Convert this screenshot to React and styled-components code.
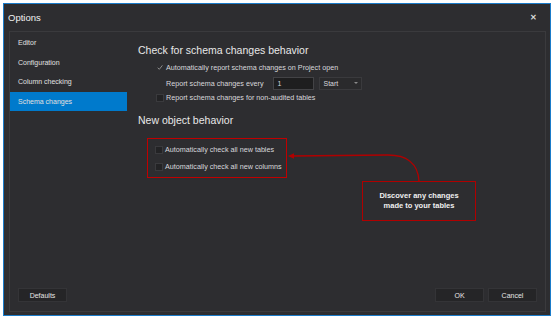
import React from "react";
import styled, { createGlobalStyle } from "styled-components";

const GlobalStyle = createGlobalStyle`
  html, body {
    margin: 0;
    padding: 0;
    background: #ffffff;
  }
  body {
    font-family: "Liberation Sans", Arial, sans-serif;
  }
`;

const Window = styled.div`
  position: relative;
  margin: 3px 0 0 3px;
  width: 546px;
  height: 311px;
  border: 1px solid #1a7bc9;
  background: #2d2d30;
  display: flex;
  flex-direction: column;
  color: #e6e6e6;
`;

const TitleBar = styled.div`
  height: 27px;
  display: flex;
  align-items: center;
  justify-content: space-between;
  padding: 0 13px 0 4px;
  font-size: 9.5px;
  color: #f1f1f1;
`;

const Close = styled.span`
  font-size: 7.5px;
  font-weight: bold;
  color: #d8d8d8;
`;

const Frame = styled.div`
  flex: 1;
  margin: 0 4px 3px 5px;
  border: 1px solid #3a3a3d;
  display: flex;
  flex-direction: column;
`;

const Main = styled.div`
  flex: 1;
  display: flex;
`;

const Sidebar = styled.div`
  width: 117px;
  padding-top: 1px;
  display: flex;
  flex-direction: column;
`;

const NavItem = styled.div`
  height: 19.5px;
  display: flex;
  align-items: center;
  padding-left: 8px;
  font-size: 7px;
  color: #e0e0e0;
  background: ${(p) => (p.$active ? "#007acc" : "transparent")};
`;

const Content = styled.div`
  position: relative;
  flex: 1;
  padding: 9px 0 0 11px;
  display: flex;
  flex-direction: column;
`;

const Heading = styled.div`
  font-size: 10.5px;
  color: #e8e8e8;
  height: 17px;
  margin-top: ${(p) => p.$mt || "0"};
  display: flex;
  align-items: center;
`;

const Group = styled.div`
  padding-top: 2px;
  display: flex;
  flex-direction: column;
`;

const Row = styled.div`
  display: flex;
  align-items: center;
  height: ${(p) => p.$h || "15px"};
  padding-left: ${(p) => p.$indent || "18px"};
  font-size: 7.2px;
  color: #d8d8dc;
  gap: 2px;
`;

const Box = styled.span`
  width: 8px;
  height: 8px;
  box-sizing: border-box;
  display: inline-flex;
  align-items: center;
  justify-content: center;
  background: ${(p) => (p.$checked ? "transparent" : "#232325")};
  border: 1px solid ${(p) => (p.$checked ? "transparent" : "#3a3a3d")};
`;

const Spacer = styled.span`
  width: 8px;
`;

const NumInput = styled.div`
  width: 41px;
  height: 13px;
  margin-left: 8px;
  box-sizing: border-box;
  background: #1e1e1f;
  border: 1px solid #434346;
  font-size: 7px;
  display: flex;
  align-items: center;
  padding-left: 3px;
`;

const Select = styled.div`
  width: 43px;
  height: 13px;
  margin-left: 3px;
  box-sizing: border-box;
  background: #2a2a2c;
  border: 1px solid #3a3a3d;
  display: flex;
  align-items: center;
  justify-content: space-between;
  padding: 0 3px;
  font-size: 7px;
`;

const Caret = styled.span`
  width: 0;
  height: 0;
  border-left: 2px solid transparent;
  border-right: 2px solid transparent;
  border-top: 2px solid #8a8a8a;
`;

const Highlight = styled.div`
  margin: 10px 0 0 9px;
  width: 140px;
  height: 40px;
  box-sizing: border-box;
  border: 1.5px solid #c00000;
  display: flex;
  flex-direction: column;
  justify-content: center;
  gap: 2px;
`;

const Callout = styled.div`
  position: absolute;
  left: 235px;
  top: 149px;
  width: 114px;
  height: 40px;
  box-sizing: border-box;
  border: 1.5px solid #b00000;
  display: flex;
  flex-direction: column;
  align-items: center;
  justify-content: center;
  font-size: 7.5px;
  font-weight: bold;
  line-height: 10px;
  color: #f0f0f0;
  text-align: center;
`;

const Arrow = styled.svg`
  position: absolute;
  left: 161px;
  top: 89px;
  overflow: visible;
`;

const Footer = styled.div`
  height: 23px;
  display: flex;
  align-items: flex-start;
  padding: 0 8px;
`;

const Button = styled.div`
  width: 49px;
  height: 14px;
  box-sizing: border-box;
  background: #252527;
  border: 1px solid #343437;
  font-size: 7px;
  color: #e6e6e6;
  display: flex;
  align-items: center;
  justify-content: center;
  margin-left: ${(p) => p.$ml || "0"};
`;

const Check = () => (
  <svg width="7" height="7" viewBox="0 0 7 7">
    <path d="M0.8 3.8 L2.7 5.6 L6.3 1" fill="none" stroke="#9a9a9a" strokeWidth="1" />
  </svg>
);

export default function App() {
  return (
    <>
      <GlobalStyle />
      <Window>
        <TitleBar>
          <span>Options</span>
          <Close>✕</Close>
        </TitleBar>
        <Frame>
          <Main>
            <Sidebar>
              <NavItem>Editor</NavItem>
              <NavItem>Configuration</NavItem>
              <NavItem>Column checking</NavItem>
              <NavItem $active>Schema changes</NavItem>
            </Sidebar>
            <Content>
              <Heading>Check for schema changes behavior</Heading>
              <Group>
                <Row $h="15px">
                  <Box $checked>
                    <Check />
                  </Box>
                  Automatically report schema changes on Project open
                </Row>
                <Row $h="16px">
                  <Spacer />
                  Report schema changes every
                  <NumInput>1</NumInput>
                  <Select>
                    Start
                    <Caret />
                  </Select>
                </Row>
                <Row $h="13px">
                  <Box />
                  Report schema changes for non-audited tables
                </Row>
              </Group>
              <Heading $mt="7px">New object behavior</Heading>
              <Highlight>
                <Row $h="15px" $indent="7px">
                  <Box />
                  Automatically check all new tables
                </Row>
                <Row $h="15px" $indent="7px">
                  <Box />
                  Automatically check all new columns
                </Row>
              </Highlight>
              <Arrow width="140" height="60">
                <path
                  d="M4 35 L100 34 C118 34 130 42 131 60"
                  fill="none"
                  stroke="#b00000"
                  strokeWidth="1.3"
                />
                <path d="M0 35 L6 32.3 L6 37.7 Z" fill="#b00000" />
              </Arrow>
              <Callout>
                <span>Discover any changes</span>
                <span>made to your tables</span>
              </Callout>
            </Content>
          </Main>
          <Footer>
            <Button>Defaults</Button>
            <Button $ml="auto">OK</Button>
            <Button $ml="4px">Cancel</Button>
          </Footer>
        </Frame>
      </Window>
    </>
  );
}
